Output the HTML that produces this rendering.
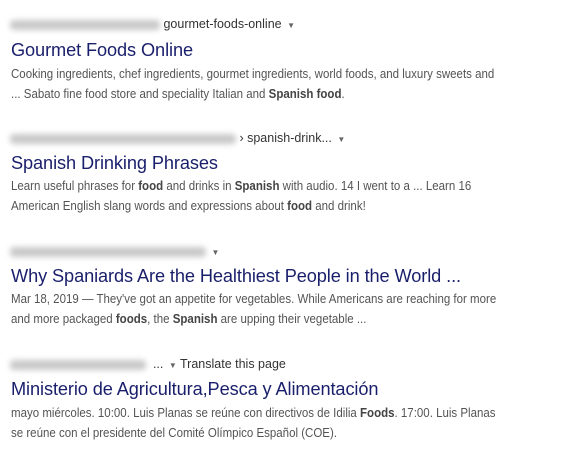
<!DOCTYPE html>
<html><head><meta charset="utf-8"><style>
body{margin:0;width:572px;height:451px;background:#fff;font-family:"Liberation Sans",Arial,sans-serif;position:relative;overflow:hidden}
.u{position:absolute;left:0;font-size:12.5px;color:#333;white-space:nowrap}
.b{display:inline-block;height:10px;background:#bbb;filter:blur(3px);vertical-align:middle;margin-left:10px;border-radius:4px;opacity:.8}
.t{position:absolute;left:11px;font-size:18.2px;color:#1a1f6b;white-space:nowrap;letter-spacing:-0.1px}
.s{position:absolute;left:11px;font-size:12.5px;line-height:20px;color:#545454;white-space:nowrap;transform-origin:0 0}
.s b{color:#444}
.a{font-size:8px;color:#666;margin-left:2px}
</style></head><body>
<div class="u" style="top:17px"><span class="b" style="width:150px"></span> gourmet-foods-online <span class="a">▼</span></div>
<div class="t" style="top:40px">Gourmet Foods Online</div>
<div class="s" style="top:64px;transform:scaleX(.92)">Cooking ingredients, chef ingredients, gourmet ingredients, world foods, and luxury sweets and<br>... Sabato fine food store and speciality Italian and <b>Spanish food</b>.</div>

<div class="u" style="top:131px"><span class="b" style="width:226px"></span> › spanish-drink... <span class="a">▼</span></div>
<div class="t" style="top:153px">Spanish Drinking Phrases</div>
<div class="s" style="top:176px;transform:scaleX(.92)">Learn useful phrases for <b>food</b> and drinks in <b>Spanish</b> with audio. 14 I went to a ... Learn 16<br>American English slang words and expressions about <b>food</b> and drink!</div>

<div class="u" style="top:244px"><span class="b" style="width:196px"></span> <span class="a">▼</span></div>
<div class="t" style="top:266px">Why Spaniards Are the Healthiest People in the World ...</div>
<div class="s" style="top:289px;transform:scaleX(.92)">Mar 18, 2019 — They've got an appetite for vegetables. While Americans are reaching for more<br>and more packaged <b>foods</b>, the <b>Spanish</b> are upping their vegetable ...</div>

<div class="u" style="top:357px"><span class="b" style="width:136px"></span> &nbsp;... <span class="a">▼</span> Translate this page</div>
<div class="t" style="top:379px">Ministerio de Agricultura,Pesca y Alimentación</div>
<div class="s" style="top:403px;transform:scaleX(.92)">mayo miércoles. 10:00. Luis Planas se reúne con directivos de Idilia <b>Foods</b>. 17:00. Luis Planas<br>se reúne con el presidente del Comité Olímpico Español (COE).</div>
</body></html>
